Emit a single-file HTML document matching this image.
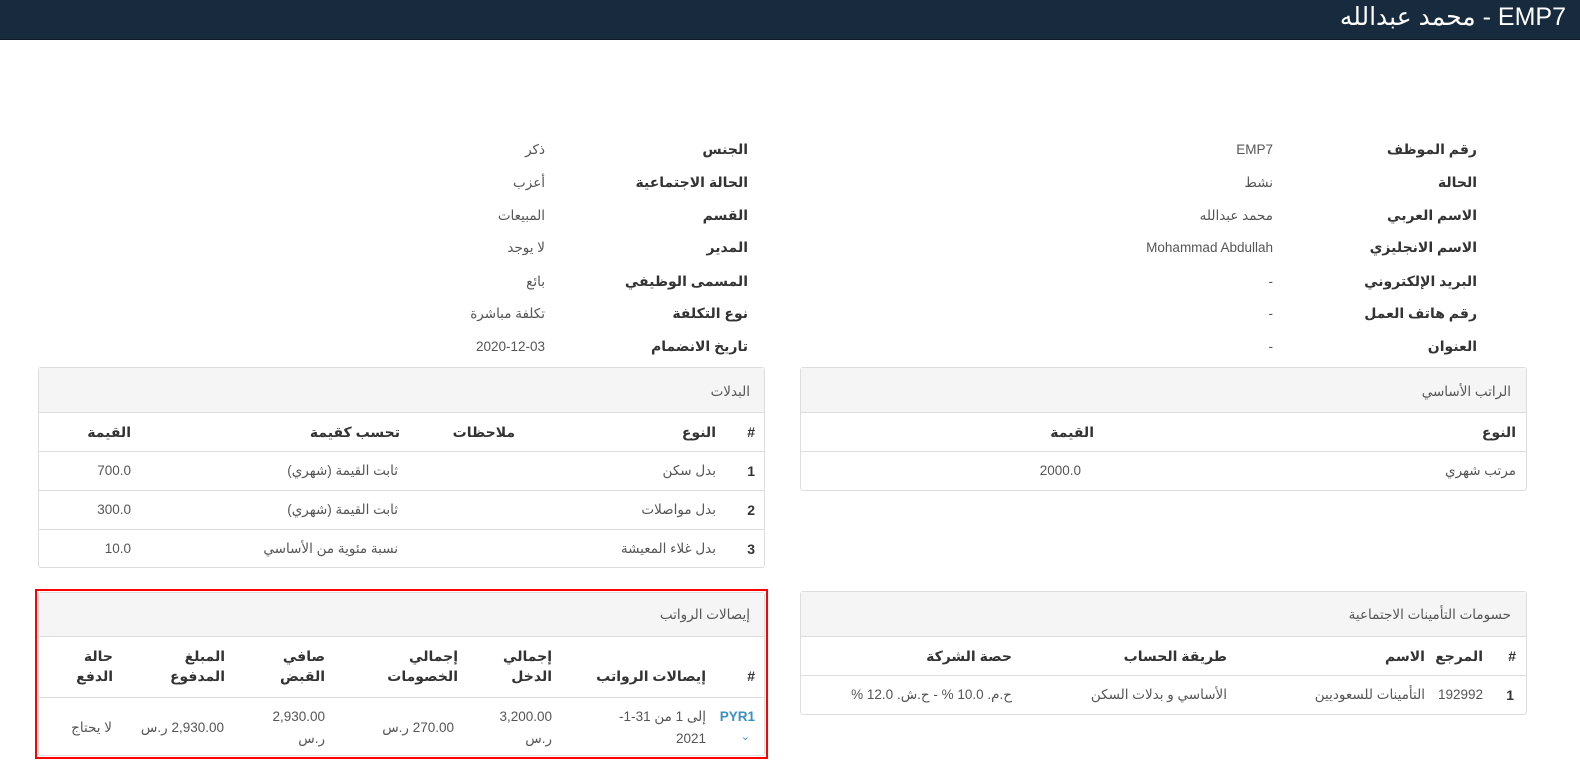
<!DOCTYPE html>
<html dir="rtl"><head><meta charset="utf-8">
<style>
*{margin:0;padding:0;box-sizing:border-box}
body{width:1580px;height:779px;overflow:hidden;background:#fff;font-family:"Liberation Sans","DejaVu Sans",sans-serif;font-size:13.5px;color:#555;position:relative}
.hdr{position:absolute;left:0;top:0;width:1580px;height:40px;background:#172a3e;border-bottom:1px solid #0e1a28}
.hdr span{position:absolute;right:14px;top:2px;color:#fff;font-size:25px;white-space:nowrap}
.t{position:absolute;white-space:nowrap;line-height:18px}
.b{font-weight:bold;color:#333;font-size:14px}
.panel{position:absolute;border:1px solid #ddd;border-radius:3px;background:#fff}
.ph{position:absolute;left:0;right:0;top:0;background:#f5f5f5;border-bottom:1px solid #ddd}
.ln{position:absolute;height:1px;background:#ddd}
.red{position:absolute;border:2px solid #f00}
.lnk{color:#3a8fc6;font-weight:bold}
</style></head><body>
<div class="hdr"><span>EMP7 - محمد عبدالله</span></div>

<div class="t b" style="right:103px;top:140px">رقم الموظف</div><div class="t" style="right:307px;top:141px">EMP7</div>
<div class="t b" style="right:103px;top:173px">الحالة</div><div class="t" style="right:307px;top:174px">نشط</div>
<div class="t b" style="right:103px;top:206px">الاسم العربي</div><div class="t" style="right:307px;top:207px">محمد عبدالله</div>
<div class="t b" style="right:103px;top:238px">الاسم الانجليزي</div><div class="t" style="right:307px;top:239px">Mohammad Abdullah</div>
<div class="t b" style="right:103px;top:272px">البريد الإلكتروني</div><div class="t" style="right:307px;top:273px">-</div>
<div class="t b" style="right:103px;top:304px">رقم هاتف العمل</div><div class="t" style="right:307px;top:305px">-</div>
<div class="t b" style="right:103px;top:337px">العنوان</div><div class="t" style="right:307px;top:338px">-</div>
<div class="t b" style="right:832px;top:140px">الجنس</div><div class="t" style="right:1035px;top:141px">ذكر</div>
<div class="t b" style="right:832px;top:173px">الحالة الاجتماعية</div><div class="t" style="right:1035px;top:174px">أعزب</div>
<div class="t b" style="right:832px;top:206px">القسم</div><div class="t" style="right:1035px;top:207px">المبيعات</div>
<div class="t b" style="right:832px;top:238px">المدير</div><div class="t" style="right:1035px;top:239px">لا يوجد</div>
<div class="t b" style="right:832px;top:272px">المسمى الوظيفي</div><div class="t" style="right:1035px;top:273px">بائع</div>
<div class="t b" style="right:832px;top:304px">نوع التكلفة</div><div class="t" style="right:1035px;top:305px">تكلفة مباشرة</div>
<div class="t b" style="right:832px;top:337px">تاريخ الانضمام</div><div class="t" style="right:1035px;top:338px">2020-12-03</div>

<div class="panel" style="left:800px;top:367px;width:727px;height:124px"><div class="ph" style="height:45px"></div><div class="ln" style="left:0;right:0;top:83px"></div></div>
<div class="t" style="right:69px;top:383px">الراتب الأساسي</div>
<div class="t b" style="right:64px;top:423px">النوع</div><div class="t b" style="right:486px;top:423px">القيمة</div>
<div class="t" style="right:64px;top:462px">مرتب شهري</div><div class="t" style="right:499px;top:462px">2000.0</div>

<div class="panel" style="left:38px;top:367px;width:727px;height:201px"><div class="ph" style="height:45px"></div>
<div class="ln" style="left:0;right:0;top:83px"></div><div class="ln" style="left:0;right:0;top:122px"></div><div class="ln" style="left:0;right:0;top:161px"></div></div>
<div class="t" style="right:830px;top:383px">البدلات</div>
<div class="t b" style="right:825px;top:423px">#</div><div class="t b" style="right:864px;top:423px">النوع</div><div class="t b" style="right:1065px;top:423px">ملاحظات</div><div class="t b" style="right:1180px;top:423px">تحسب كقيمة</div><div class="t b" style="right:1449px;top:423px">القيمة</div>
<div class="t b" style="right:825px;top:462px">1</div><div class="t" style="right:864px;top:462px">بدل سكن</div><div class="t" style="right:1182px;top:462px">ثابت القيمة (شهري)</div><div class="t" style="right:1449px;top:462px">700.0</div>
<div class="t b" style="right:825px;top:501px">2</div><div class="t" style="right:864px;top:501px">بدل مواصلات</div><div class="t" style="right:1182px;top:501px">ثابت القيمة (شهري)</div><div class="t" style="right:1449px;top:501px">300.0</div>
<div class="t b" style="right:825px;top:540px">3</div><div class="t" style="right:864px;top:540px">بدل غلاء المعيشة</div><div class="t" style="right:1182px;top:540px">نسبة مئوية من الأساسي</div><div class="t" style="right:1449px;top:540px">10.0</div>

<div class="panel" style="left:800px;top:591px;width:727px;height:124px"><div class="ph" style="height:45px"></div><div class="ln" style="left:0;right:0;top:83px"></div></div>
<div class="t" style="right:69px;top:606px">حسومات التأمينات الاجتماعية</div>
<div class="t b" style="right:64px;top:647px">#</div><div class="t b" style="right:97px;top:647px">المرجع</div><div class="t b" style="right:155px;top:647px">الاسم</div><div class="t b" style="right:353px;top:647px">طريقة الحساب</div><div class="t b" style="right:568px;top:647px">حصة الشركة</div>
<div class="t b" style="right:66px;top:686px">1</div><div class="t" style="right:97px;top:686px">192992</div><div class="t" style="right:155px;top:686px">التأمينات للسعوديين</div><div class="t" style="right:353px;top:686px">الأساسي و بدلات السكن</div><div class="t" style="right:568px;top:686px">ح.م. 10.0 % - ح.ش. 12.0 %</div>

<div class="panel" style="left:38px;top:592px;width:727px;height:164px"><div class="ph" style="height:44px"></div><div class="ln" style="left:0;right:0;top:104px"></div></div>
<div class="red" style="left:35px;top:589px;width:733px;height:170px"></div>
<div class="t" style="right:830px;top:606px">إيصالات الرواتب</div>
<div class="t b" style="right:825px;top:667px">#</div>
<div class="t b" style="right:874px;top:667px">إيصالات الرواتب</div>
<div class="t b" style="right:1028px;top:647px">إجمالي</div><div class="t b" style="right:1028px;top:667px">الدخل</div>
<div class="t b" style="right:1122px;top:647px">إجمالي</div><div class="t b" style="right:1122px;top:667px">الخصومات</div>
<div class="t b" style="right:1255px;top:647px">صافي</div><div class="t b" style="right:1255px;top:667px">القبض</div>
<div class="t b" style="right:1355px;top:647px">المبلغ</div><div class="t b" style="right:1355px;top:667px">المدفوع</div>
<div class="t b" style="right:1467px;top:647px">حالة</div><div class="t b" style="right:1467px;top:667px">الدفع</div>
<div class="t lnk" style="right:825px;top:708px">PYR1</div><div class="t" style="right:830px;top:728px;color:#3a8fc6;font-size:11px">⌄</div>
<div class="t" style="right:874px;top:708px">إلى 1 من 31-1-</div><div class="t" style="right:874px;top:730px">2021</div>
<div class="t" style="right:1028px;top:708px">3,200.00</div><div class="t" style="right:1028px;top:730px">ر.س</div>
<div class="t" style="right:1126px;top:719px">270.00 ر.س</div>
<div class="t" style="right:1255px;top:708px">2,930.00</div><div class="t" style="right:1255px;top:730px">ر.س</div>
<div class="t" style="right:1356px;top:719px">2,930.00 ر.س</div>
<div class="t" style="right:1468px;top:719px">لا يحتاج</div>
</body></html>
